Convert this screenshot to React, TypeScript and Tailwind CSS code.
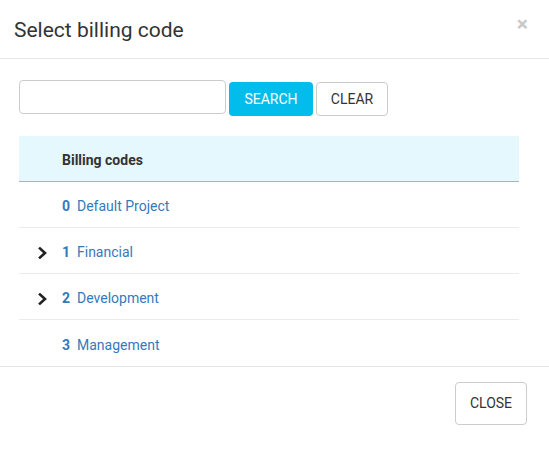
import React, { useState } from 'react';

interface BillingCode {
  id: number;
  name: string;
  hasChildren: boolean;
}

const codes: BillingCode[] = [
  { id: 0, name: 'Default Project', hasChildren: false },
  { id: 1, name: 'Financial', hasChildren: true },
  { id: 2, name: 'Development', hasChildren: true },
  { id: 3, name: 'Management', hasChildren: false },
];

const Chevron: React.FC = () => (
  <svg width="10" height="12" viewBox="0 0 10 12" className="block">
    <path d="M2 1.5 L7 6 L2 10.5" fill="none" stroke="#222" strokeWidth="2.6" strokeLinecap="square" />
  </svg>
);

const App: React.FC = () => {
  const [query, setQuery] = useState('');

  return (
    <div className="w-[549px] h-[457px] bg-white text-[#333] font-['Roboto','Liberation_Sans',sans-serif]">
      <div className="flex items-center justify-between h-[59px] pl-[14px] pr-[21px] border-b border-[#e5e5e5]">
        <h4 className="text-[21px] leading-none pt-[3px]">Select billing code</h4>
        <button className="text-[21px] font-bold leading-none text-[#c8c8c8] -mt-[9px]">×</button>
      </div>

      <div className="pl-[19px] pr-[30px] pt-[21px]">
        <div className="flex items-start">
          <input
            value={query}
            onChange={(e) => setQuery(e.target.value)}
            className="w-[207px] h-[34px] border border-[#ccc] rounded-[4px] px-3 outline-none"
          />
          <button className="mt-[2px] ml-[3px] h-[34px] w-[84px] rounded-[4px] bg-[#02bdec] text-white text-[14px]">
            SEARCH
          </button>
          <button className="mt-[2px] ml-[3px] h-[34px] w-[72px] rounded-[4px] border border-[#ccc] bg-white text-[14px] text-[#333]">
            CLEAR
          </button>
        </div>

        <div className="mt-[20px]">
          <div className="flex items-center h-[46px] bg-[#e5f8fd] border-b border-[#a9b3bb] pl-[43px] pt-[3px] text-[14px] font-bold">
            Billing codes
          </div>
          {codes.map((c, i) => (
            <div
              key={c.id}
              className={
                i < codes.length - 1
                  ? 'flex items-center h-[46px] pt-[4px] border-b border-[#ebebeb] text-[14px] text-[#3579bd]'
                  : 'flex items-center h-[46px] pt-[4px] text-[14px] text-[#3579bd]'
              }
            >
              <div className="w-[43px] flex justify-end pr-[14px]">{c.hasChildren && <Chevron />}</div>
              <span className="font-bold w-[15px]">{c.id}</span>
              <span>{c.name}</span>
            </div>
          ))}
        </div>
      </div>

      <div className="flex justify-end border-t border-[#e5e5e5] pt-[15px] pr-[22px]">
        <button className="h-[43px] w-[72px] rounded-[4px] border border-[#ccc] bg-white text-[14px] text-[#333]">
          CLOSE
        </button>
      </div>
    </div>
  );
};

export default App;
